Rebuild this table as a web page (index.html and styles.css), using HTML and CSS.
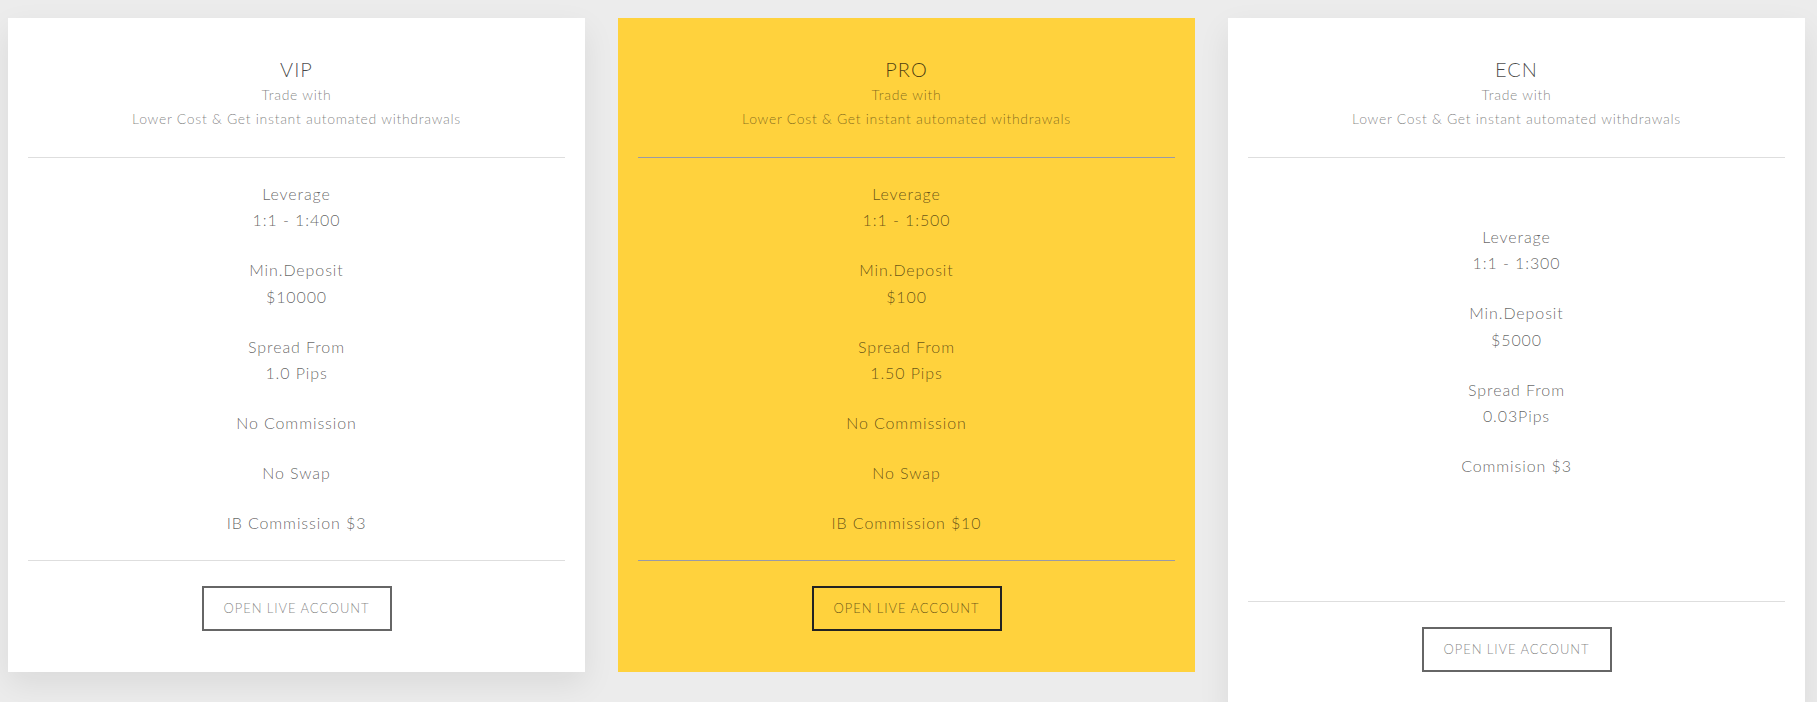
FILE: index.html
```html
<!DOCTYPE html>
<html lang="en">
<head>
  <meta charset="UTF-8">
  <meta name="viewport" content="width=device-width, initial-scale=1.0">
  <title>Account Types</title>
  <link rel="stylesheet" href="styles.css">
</head>
<body>
  <main class="plans">
    <section class="plan">
      <header class="plan-head">
        <h3>VIP</h3>
        <p>Trade with</p>
        <p>Lower Cost &amp; Get instant automated withdrawals</p>
      </header>
      <ul class="features">
        <li>Leverage<br>1:1 - 1:400</li>
        <li>Min.Deposit<br>$10000</li>
        <li>Spread From<br>1.0 Pips</li>
        <li>No Commission</li>
        <li>No Swap</li>
        <li>IB Commission $3</li>
      </ul>
      <div class="plan-foot">
        <a class="btn" href="#">Open Live Account</a>
      </div>
    </section>

    <section class="plan plan-featured">
      <header class="plan-head">
        <h3>PRO</h3>
        <p>Trade with</p>
        <p>Lower Cost &amp; Get instant automated withdrawals</p>
      </header>
      <ul class="features">
        <li>Leverage<br>1:1 - 1:500</li>
        <li>Min.Deposit<br>$100</li>
        <li>Spread From<br>1.50 Pips</li>
        <li>No Commission</li>
        <li>No Swap</li>
        <li>IB Commission $10</li>
      </ul>
      <div class="plan-foot">
        <a class="btn" href="#">Open Live Account</a>
      </div>
    </section>

    <section class="plan">
      <header class="plan-head">
        <h3>ECN</h3>
        <p>Trade with</p>
        <p>Lower Cost &amp; Get instant automated withdrawals</p>
      </header>
      <ul class="features features-tall">
        <li>Leverage<br>1:1 - 1:300</li>
        <li>Min.Deposit<br>$5000</li>
        <li>Spread From<br>0.03Pips</li>
        <li>Commision $3</li>
      </ul>
      <div class="plan-foot">
        <a class="btn" href="#">Open Live Account</a>
      </div>
    </section>
  </main>
</body>
</html>
```

FILE: styles.css
```css
:root {
  font-family: Lato, "Open Sans", sans-serif;
  font-weight: 300;
}
body {
  margin: 0;
  background: #ececec;
}
.plans {
  display: flex;
  align-items: flex-start;
  gap: 33px;
  padding: 18px 0 0 8px;
}
.plan {
  flex: 0 0 577px;
  box-sizing: border-box;
  padding: 0 20px;
  background: #fff;
  text-align: center;
  box-shadow: 0 12px 30px rgba(0, 0, 0, 0.08);
}
.plan-featured {
  background: #ffd23d;
  box-shadow: none;
}
.plan-head {
  padding: 37px 0 26px;
  border-bottom: 1px solid #dedede;
}
.plan-head h3 {
  margin: 0;
  font-size: 20px;
  font-weight: 300;
  line-height: 28px;
  letter-spacing: 1px;
  color: rgba(0, 0, 0, 0.72);
}
.plan-head p {
  margin: 0;
  font-size: 14px;
  line-height: 24px;
  letter-spacing: 0.7px;
  color: rgba(0, 0, 0, 0.5);
}
.features {
  list-style: none;
  margin: 0;
  padding: 22.5px 0 0;
  border-bottom: 1px solid #dedede;
}
.features li {
  margin-bottom: 23.5px;
  font-size: 16px;
  line-height: 26.5px;
  letter-spacing: 0.9px;
  color: rgba(0, 0, 0, 0.62);
}
.features-tall {
  box-sizing: border-box;
  min-height: 444px;
  padding-top: 65.5px;
}
.plan-featured .plan-head,
.plan-featured .features {
  border-bottom-color: #9a9aa6;
}
.plan-foot {
  padding: 25px 0 41px;
}
.btn {
  display: inline-block;
  width: 190px;
  box-sizing: border-box;
  padding: 0;
  border: 2px solid #666;
  font-size: 13px;
  line-height: 40.5px;
  letter-spacing: 0.9px;
  text-transform: uppercase;
  text-decoration: none;
  color: rgba(0, 0, 0, 0.5);
}
.plan-featured .btn {
  border-color: #222;
  color: rgba(0, 0, 0, 0.6);
}
```
